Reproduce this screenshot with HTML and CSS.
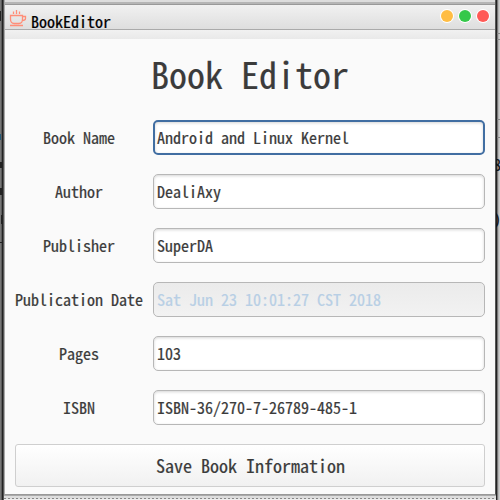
FILE: index.html
```html
<!DOCTYPE html>
<html lang="en">
<head>
<meta charset="utf-8">
<title>BookEditor</title>
<link rel="stylesheet" href="styles.css">
</head>
<body>
<div class="behind left" aria-hidden="true"><i class="bit b1"></i><i class="bit b3"></i><i class="bit b4"></i><i class="bit b5"></i><i class="bit b6"></i><i class="bit b7"></i></div>
<main class="window">
  <header class="titlebar">
    <svg class="cup" viewBox="0 0 18 18" width="18" height="18" fill="none" stroke="#ff8e78" stroke-width="1.3"><path d="M1.5 5.5H13.5V9C13.5 12 12 13.5 10 13.5H5C3 13.5 1.5 12 1.5 9ZM13.5 6.5H16.5V8.5C16.5 10 15 10.5 13 10.5M1 15.5H14M4.5 1.5V4M7.5 0V4M10.5 1.5V4"/></svg>
    <span class="name">BookEditor</span>
    <div class="controls"><i class="dot yellow"></i><i class="dot green"></i><i class="dot red"></i></div>
  </header>
  <div class="strip"></div>
  <form class="content">
    <h1>Book Editor</h1>
    <div class="row"><label>Book Name</label><div class="field focus">Android and Linux Kernel</div></div>
    <div class="row"><label>Author</label><div class="field">DealiAxy</div></div>
    <div class="row"><label>Publisher</label><div class="field">SuperDA</div></div>
    <div class="row"><label>Publication Date</label><div class="field disabled">Sat Jun 23 10:01:27 CST 2018</div></div>
    <div class="row"><label>Pages</label><div class="field">103</div></div>
    <div class="row"><label>ISBN</label><div class="field">ISBN-36/270-7-26789-485-1</div></div>
    <button type="button">Save Book Information</button>
  </form>
</main>
<div class="behind right" aria-hidden="true"><i class="rule r1"></i><i class="rule r2"></i><i class="rule r3"></i><i class="rule r4"></i><span class="peek p8">8</span><span class="peek pp">)</span></div>
<div class="floor"></div>
</body>
</html>
```
FILE: styles.css
```css
* { box-sizing: border-box; }
body {
  margin: 0; width: 500px; height: 500px; overflow: hidden; position: relative;
  display: grid; grid-template-columns: 4px 492px 4px; grid-template-rows: 495px 5px;
  font: 16px/24px "Noto Sans Mono CJK SC", "Noto Sans Mono CJK JP", "DejaVu Sans Mono", monospace;
  color: #3b3b3b; background: #c8c8c8;
  -webkit-text-stroke: .22px currentColor;
}
.behind { position: relative; overflow: hidden; grid-row: 1 / 3; }
.left { grid-column: 1; background: linear-gradient(90deg, #777 0 1px, #5c5c5c 1px 2px, #222 2px 3px, #555 3px); }
.right { grid-column: 3; background: linear-gradient(90deg, #222 0 1px, #777 1px 2px, #b5b5b5 2px 3px, #ccc 3px); }
.bit { position: absolute; left: 0; width: 1px; height: 10px; background: #222; }
.b1 { top: 11px; } .b3 { top: 134px; height: 6px; background: #245b78; }
.b4 { top: 162px; height: 6px; width: 2px; } .b5 { top: 188px; height: 7px; width: 2px; }
.b6 { top: 215px; left: 1px; height: 9px; } .b7 { top: 242px; width: 3px; height: 1px; }
.rule { position: absolute; left: 1px; right: 0; height: 1px; background: #888; }
.r1 { top: 33px; } .r2 { top: 39px; } .r3 { top: 119px; } .r4 { top: 137px; }
.peek { position: absolute; left: -3px; color: #111; }
.p8 { top: 152px; } .pp { top: 206px; }
.window { grid-column: 2; grid-row: 1; border-left: 1px solid #aaa; border-right: 1px solid #555; background: #fafafa; border-bottom: 1px solid #999; }
.titlebar {
  height: 30px; padding: 4px 6px 0 4px; display: flex; align-items: flex-start;
  border-bottom: 1px solid #aaa;
  background: linear-gradient(#ddd 0 2px, #b5b5b5 2px 4px, #999 4px 5px, #f1f1f1 5px, #dedede);
}
.cup { margin-top: 6px; }
.name { margin: 5px 0 0 4px; color: #000; line-height: 24px; }
.controls { display: flex; gap: 6px; margin: 6px 0 0 auto; }
.dot { width: 12px; height: 12px; border-radius: 50%; box-shadow: 0 0 0 1px #fff; }
.yellow { background: #ffbd44; } .green { background: #35c84a; } .red { background: #ff5a56; }
.strip { height: 9px; background: linear-gradient(#f1f1f1, #e9e9e9); }
.content { padding: 0 10px; }
h1 { margin: 0; height: 82px; padding-top: 7px; font-size: 36px; font-weight: 400; line-height: 54px; text-align: center; -webkit-text-stroke-width: .2px; }
.row { display: grid; grid-template-columns: 128px 332px; grid-template-rows: 34px; gap: 10px; align-items: start; height: 34px; margin-bottom: 20px; }
.row:first-of-type { margin-top: -1px; }
label { text-align: center; white-space: nowrap; line-height: 34px; }
.field {
  height: 35px; line-height: 33px; padding-left: 3px; border: 1px solid #b7b7b7; border-radius: 5px;
  background: #fff; box-shadow: inset 0 1px 3px #d5d5d5; white-space: nowrap;
}
.focus { border: 2px solid #416ea2; padding-left: 2px; line-height: 31px; }
.disabled { color: #b8cfe5; background: linear-gradient(#ebebeb, #f2f2f2); box-shadow: none; }
button {
  display: block; width: 470px; height: 43px; padding: 0 0 1px 1px; border: 1px solid #cfcfcf; border-radius: 3px;
  font: 18px/27px "Noto Sans Mono CJK SC", "Noto Sans Mono CJK JP", "DejaVu Sans Mono", monospace;
  color: #3b3b3b; background: linear-gradient(#fff, #f1f1f1);
}
.floor {
  grid-column: 2; grid-row: 2;
  background: linear-gradient(#aaa 0 1px, #ddd 1px 3px, transparent 3px 4px, #eee 4px), repeating-linear-gradient(90deg, #888 0 2px, #ddd 2px 4px);
}
```
